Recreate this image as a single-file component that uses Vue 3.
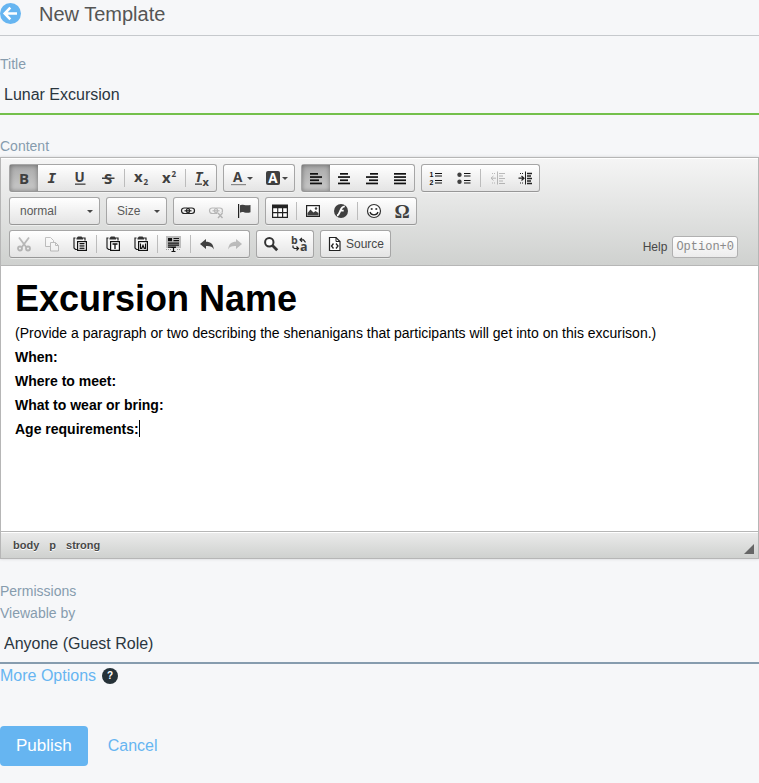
<script setup>
import { ref } from 'vue'

const title = ref('Lunar Excursion')
const format = ref('normal')
const size = ref('')
const viewer = ref('guest')

const glyph = (text, x, y, px, extra = '') =>
  `<text x="${x}" y="${y}" font-size="${px}" font-weight="700" font-family="Open Sans, sans-serif" ${extra}>${text}</text>`

const bars = (rows) =>
  rows.map(([x, w], i) => `<rect x="${x}" y="${3 + i * 3.2}" width="${w}" height="1.7" fill="#111"/>`).join('')

const clipboard =
  '<path d="M3.500 2H2v10l1.500 1.500H5M10.500 2H13V4.500" fill="none" stroke="#222" stroke-width="1.200"/><path d="M4.500 3.500V2L6 .5h3.500L11 2v1.500z" fill="#333"/><rect x="5.600" y="5.600" width="8.800" height="8.800" fill="#fff" stroke="#111" stroke-width="1.200"/>'

const chain =
  '<rect x="1.500" y="5" width="8" height="5.500" rx="2.700"/><rect x="6.500" y="5" width="8" height="5.500" rx="2.700"/><path d="M4.500 7.800h7"/>'

const icons = {
  bold: glyph('B', 3, 13.5, 15),
  italic: glyph('I', 3.5, 13, 14.5, 'font-style="italic" style="font-family:\'DejaVu Sans Mono\',monospace"'),
  underline: glyph('U', 2.5, 12, 13.5) + '<rect x="3" y="13.500" width="10.500" height="1.300"/>',
  strike: glyph('S', 4, 13.5, 15) + '<rect x="2" y="7.500" width="12.500" height="1.500"/>',
  sub: glyph('x', 1, 12, 15) + glyph('2', 10.5, 15, 8),
  sup: glyph('x', 1, 13, 15) + glyph('2', 10.5, 7, 8),
  clear: glyph('T', 1, 12, 14, 'font-style="italic"') + '<rect x="1" y="13.500" width="7" height="1.300"/>' + glyph('x', 8.5, 15.5, 11),
  color: glyph('A', 3, 12, 13.5) + '<rect x="1" y="14" width="15" height="1.200" fill="#888"/>',
  highlight: '<rect x="1" y="1" width="14" height="14" rx="2"/>' + glyph('A', 3.2, 13, 13.5, 'style="fill:#fff"'),
  left: bars([[2, 8], [2, 12], [2, 9], [2, 12]]),
  center: bars([[4, 8], [2, 12], [4, 8], [2, 12]]),
  right: bars([[6, 8], [2, 12], [5, 9], [2, 12]]),
  justify: bars([[2, 12], [2, 12], [2, 12], [2, 12]]),
  numbered:
    glyph('1', 1.5, 7, 7, 'style="font-family:\'Liberation Sans\',sans-serif;fill:#111"') +
    glyph('2', 1.5, 15, 7, 'style="font-family:\'Liberation Sans\',sans-serif;fill:#111"') +
    '<path d="M7 3.500h7M7 6h7M7 10.500h7M7 13h7" stroke="#111" stroke-width="1.200"/>',
  bullets:
    '<circle cx="3.500" cy="4.800" r="2.200"/><circle cx="3.500" cy="11.800" r="2.200"/><path d="M8 3.500h6.500M8 6h6.500M8 10.500h6.500M8 13h6.500" stroke="#111" stroke-width="1.200"/>',
  outdent:
    '<g fill="none" stroke="#333"><path d="M8.500 1.500v13"/><path d="M10 3.500h6M10 6h4M10 8.500h6M10 11h4M10 13.500h6" stroke-width="1.200"/><path d="M3 3.500h4M3 13h4" stroke-dasharray="1 1"/><path d="M2 8.200h5M4.500 6L2 8.200l2.500 2.300"/></g>',
  indent:
    '<g fill="none" stroke="#222"><path d="M8.500 1.500v13"/><path d="M10 3.500h5M10 6h4M10 8.500h5M10 11h4M10 13.500h5" stroke-width="1.300"/><path d="M3 3.500h4M3 13h4" stroke-dasharray="1 1"/><path d="M1.500 8.200h5M4.500 6L7 8.200l-2.500 2.300" stroke-width="1.200"/></g>',
  link: `<g fill="none" stroke="#222" stroke-width="1.200">${chain}</g>`,
  unlink: `<g fill="none" stroke="#333" stroke-width="1.200">${chain}<path d="M10 10l4.500 5M14.500 10L10 15" stroke="#f4f4f4" stroke-width="3"/><path d="M10 10l4.500 5M14.500 10L10 15" stroke-width="1.500"/></g>`,
  flag: '<rect x="2" y="1" width="1.200" height="14" fill="#222"/><path d="M4 2.300c2.500-1.800 4.500 1 10.500-.3v7.200C9 11 7 7.500 4 9.800z"/>',
  table: '<path d="M0 1.500h16V15H0z" fill="#222"/><path d="M1.200 5.300h4v3.700h-4zM6.300 5.300h3.700V9H6.300zM11.200 5.300h3.600V9h-3.600zM1.200 10.200h4v3.600h-4zM6.300 10.200h3.700v3.600H6.300zM11.200 10.200h3.600v3.600h-3.600z" fill="#fff"/>',
  image: '<rect x="1.600" y="2.600" width="12.800" height="10.800" fill="#fff" stroke="#222" stroke-width="1.200"/><circle cx="11" cy="5.500" r="1.200"/><path d="M2.500 12.500V10l3-3.500 3 3 2-1.500 3 2v2.500z"/>',
  flash: '<circle cx="8" cy="8" r="7"/><path d="M11.800 3.300C8.500 3.500 8 6 7 8.500S5.500 12.300 4 12.500M7.500 7.700h3.200" fill="none" stroke="#fff" stroke-width="1.800"/>',
  smile: '<circle cx="8" cy="8" r="6.500" fill="#fff" stroke="#333" stroke-width="1.200"/><circle cx="5.700" cy="6" r="1.100"/><circle cx="10.300" cy="6" r="1.100"/><path d="M4 9c1 3.800 7 3.800 8 0" fill="none" stroke="#222" stroke-width="1.200"/>',
  omega: glyph('Ω', 0.5, 14.5, 19, 'style="font-family:\'Liberation Serif\',serif"'),
  cut: '<g fill="none" stroke="#333" stroke-width="1.800"><path d="M3 1.500l7.500 10M13 1.500L5.500 11.500"/><circle cx="4" cy="12.500" r="2"/><circle cx="12" cy="12.500" r="2"/></g>',
  copy: '<g fill="#fff" stroke="#444"><path d="M1.500 1.500h5l3 3v6h-8z"/><path d="M6.500 6.500h5l3 3v5.500h-8z"/><path d="M11.500 6.500v3h3" fill="none"/></g>',
  paste: clipboard + '<path d="M7.500 7.500h5M7.500 9.200h5M7.500 10.900h5M7.500 12.600h5" stroke="#111"/>',
  pasteText: clipboard + '<path d="M7.500 8h5M10 8v5" fill="none" stroke="#111" stroke-width="1.300"/>',
  pasteWord: clipboard + '<path d="M7.500 7.500v4.800h1.300l1.200-3 1.200 3h1.300V7.500" fill="none" stroke="#111" stroke-width="1.200"/>',
  selectAll:
    '<rect x="0" y="0" width="15" height="12" fill="#bbb"/><path d="M2 2h4v3.200H2z" fill="#111"/><path d="M7.500 2.500H13M7.500 4.700H13M2 7.200h11M2 9.200h11M2 11.200h8" stroke="#111" stroke-width="1.200"/><path d="M5.500 11.500h4M7.500 11.500v4.200M5.500 15.500h4" stroke="#111" stroke-width="1.200"/><path d="M0 13.500h5M11 13.500h4" stroke="#999" stroke-dasharray="1 1"/>',
  undo: '<path d="M1 8l6-5v2.800c4.500 0 7.500 2.200 7.800 7.700C13.500 10.500 11 9.800 7 10v3z"/>',
  redo: '<path d="M15 8L9 3v2.800C4.500 5.800 1.500 8 1.200 13.500 2.500 10.500 5 9.800 9 10v3z"/>',
  find: '<circle cx="6.300" cy="6.300" r="4.200" fill="#fff" stroke="#333" stroke-width="2"/><path d="M9.500 9.500l4.700 4.700" stroke="#333" stroke-width="2.800"/>',
  replace: glyph('b', 0, 8, 10.5) + glyph('a', 9, 15, 12.5) +
    '<path d="M9 3.800h3.500l2 2.500M11 1.800l-2 2 2 2M2 9.500v2l1.500 1H7M5.500 10.500l2 2-2 2" fill="none" stroke="#222" stroke-width="1.200"/>',
  source: '<path d="M2.500 1.500H9l4 4v9H2.500z" fill="#fff" stroke="#222" stroke-width="1.200"/><path d="M9 1.500v4h4" fill="none" stroke="#222"/><path d="M6.500 7.500l-2 2.500 2 2.500M9 7.500l2 2.500-2 2.500" fill="none" stroke="#222" stroke-width="1.300"/>',
}

const b = (icon, label, extra = {}) => ({ icon, label, ...extra })
const sep = { sep: true }
const off = { disabled: true }

const rows = [
  [
    [b('bold', 'Bold', { on: true }), b('italic', 'Italic'), b('underline', 'Underline'), b('strike', 'Strike Through'), sep, b('sub', 'Subscript'), b('sup', 'Superscript'), sep, b('clear', 'Remove Format')],
    [b('color', 'Text Color', { menu: true }), b('highlight', 'Background Color', { menu: true })],
    [b('left', 'Align Left', { on: true }), b('center', 'Center'), b('right', 'Align Right'), b('justify', 'Justify')],
    [b('numbered', 'Numbered List'), b('bullets', 'Bulleted List'), sep, b('outdent', 'Decrease Indent', off), b('indent', 'Increase Indent')],
  ],
  [
    [b('link', 'Link'), b('unlink', 'Unlink', off), b('flag', 'Anchor')],
    [b('table', 'Table'), sep, b('image', 'Image'), b('flash', 'Flash'), sep, b('smile', 'Smiley'), b('omega', 'Special Character')],
  ],
  [
    [b('cut', 'Cut', off), b('copy', 'Copy', off), b('paste', 'Paste'), sep, b('pasteText', 'Paste as plain text'), b('pasteWord', 'Paste from Word'), sep, b('selectAll', 'Select All'), sep, b('undo', 'Undo'), b('redo', 'Redo', off)],
    [b('find', 'Find'), b('replace', 'Replace')],
    [b('source', 'Source', { text: 'Source' })],
  ],
]
</script>

<template>
  <main class="page">
    <header class="header">
      <a class="back" href="#" aria-label="Back">
        <svg viewBox="0 0 21 21" width="21" height="21">
          <circle cx="10.500" cy="10.500" r="10.500" fill="#66b5f1" />
          <path d="M17 10.500H5M10.300 4.700L4.700 10.500l5.600 5.800" fill="none" stroke="#fff" stroke-width="2.600" />
        </svg>
      </a>
      <h1>New Template</h1>
    </header>

    <form class="form" @submit.prevent>
      <label class="label" for="title">Title</label>
      <input id="title" v-model="title" class="field valid" type="text" />

      <div id="content-label" class="label content-label">Content</div>
      <section class="editor">
        <div class="toolbar" role="toolbar" aria-label="Editor toolbar">
          <div v-for="(row, r) in rows" :key="r" class="row">
            <template v-if="r === 1">
              <span class="combo format">
                <select v-model="format" aria-label="Paragraph Format">
                  <option value="normal">normal</option>
                </select>
              </span>
              <span class="combo size">
                <select v-model="size" aria-label="Font Size">
                  <option value="">Size</option>
                </select>
              </span>
            </template>
            <div v-for="(group, g) in row" :key="g" class="group">
              <template v-for="(item, i) in group" :key="i">
                <span v-if="item.sep" class="sep"></span>
                <button
                  v-else
                  type="button"
                  class="tool"
                  :class="{ on: item.on, menu: item.menu }"
                  :disabled="item.disabled"
                  :aria-label="item.label"
                >
                  <svg class="icon" viewBox="0 0 16 16" v-html="icons[item.icon]"></svg>
                  <span v-if="item.text">{{ item.text }}</span>
                </button>
              </template>
            </div>
            <div v-if="r === 2" class="help">Help <kbd>Option+0</kbd></div>
          </div>
        </div>
        <div class="document" contenteditable="true" role="textbox" aria-labelledby="content-label" spellcheck="false">
          <h2>Excursion Name</h2>
          <p>(Provide a paragraph or two describing the shenanigans that participants will get into on this excurison.)</p>
          <p><strong>When:</strong></p>
          <p><strong>Where to meet:</strong></p>
          <p><strong>What to wear or bring:</strong></p>
          <p><strong>Age requirements:</strong><span class="caret"></span></p>
        </div>
        <footer class="status">
          <a href="#">body</a><a href="#">p</a><a href="#">strong</a>
          <svg class="grip" viewBox="0 0 10 10" width="10" height="10"><path d="M10 0v10H0z" fill="#666" /></svg>
        </footer>
      </section>

      <div class="label permissions">Permissions</div>
      <label class="label" for="viewer">Viewable by</label>
      <select id="viewer" v-model="viewer" class="field">
        <option value="guest">Anyone (Guest Role)</option>
      </select>
      <div class="more">
        <a href="#">More Options</a>
        <button type="button" class="hint" aria-label="About permissions">?</button>
      </div>

      <div class="actions">
        <button type="submit" class="publish">Publish</button>
        <a href="#">Cancel</a>
      </div>
    </form>
  </main>
</template>

<style>
body {
  background: #f6f7f9;
}
</style>

<style scoped>
.page,
.page * {
  box-sizing: border-box;
}
.page {
  font-family: "Liberation Sans", Arial, sans-serif;
  color: #2a363f;
}
a {
  color: #66b5f1;
  text-decoration: none;
}
button,
input,
select {
  font-family: inherit;
  margin: 0;
}
.header {
  display: flex;
  align-items: center;
  gap: 18px;
  height: 36px;
  padding-bottom: 8px;
  border-bottom: 1px solid #c6c9cd;
}
.back {
  display: flex;
}
h1 {
  margin: 0;
  font-size: 20px;
  line-height: 24px;
  font-weight: 500;
  color: #555;
}
.form {
  display: flex;
  flex-direction: column;
  padding-top: 17px;
}
.label {
  font-size: 14px;
  line-height: 22px;
  font-weight: 500;
  color: #869cae;
}
.content-label {
  margin-top: 20px;
}
.permissions {
  margin-top: 21px;
}
.field {
  appearance: none;
  width: 100%;
  height: 40px;
  padding: 0 4px;
  border: 0;
  border-bottom: 2px solid #869cae;
  border-radius: 0;
  outline: none;
  background: transparent;
  font-size: 16px;
  color: #2a363f;
}
.field.valid {
  padding-top: 2px;
  border-color: #74c04c;
}

.editor {
  border: 1px solid #b6b6b6;
  box-shadow: 0 0 3px rgba(0, 0, 0, 0.15);
}
.toolbar {
  display: flex;
  flex-direction: column;
  gap: 5px;
  padding: 6px 8px 7px;
  border-bottom: 1px solid #b6b6b6;
  background: linear-gradient(#f5f5f5, #cfd1cf);
  box-shadow: inset 0 1px 0 #fff;
}
.row {
  display: flex;
  gap: 6px;
}
.group,
.combo {
  display: flex;
  height: 28px;
  border: 1px solid #a6a6a6;
  border-bottom-color: #979797;
  border-radius: 3px;
  background: linear-gradient(#fff, #e4e4e4);
  box-shadow: 0 1px 0 rgba(255, 255, 255, 0.5);
}
.tool {
  display: flex;
  align-items: center;
  gap: 3px;
  padding: 0 6px;
  border: 0;
  background: transparent;
  font-size: 12px;
  color: #474747;
}
.tool.on {
  background: linear-gradient(#aaa, #cacaca);
  box-shadow: inset 0 0 5px rgba(0, 0, 0, 0.4);
}
.tool:disabled .icon {
  opacity: 0.3;
}
.icon {
  width: 16px;
  height: 16px;
  fill: #404040;
  overflow: visible;
}
.tool.menu {
  gap: 1px;
}
.tool.menu::after,
.combo::after {
  content: "";
  border: 3px solid transparent;
  border-top-color: #474747;
  border-bottom: 0;
}
.sep {
  width: 1px;
  height: 18px;
  margin: 4px 2px;
  background: #bcbcbc;
}
.combo {
  position: relative;
}
.combo::after {
  position: absolute;
  top: 12px;
  right: 6px;
  pointer-events: none;
}
.combo select {
  appearance: none;
  width: 100%;
  padding: 0 10px;
  border: 0;
  outline: none;
  background: transparent;
  font-size: 12px;
  color: #5a5a5a;
}
.format {
  width: 91px;
}
.size {
  width: 61px;
}
.help {
  display: flex;
  align-items: center;
  align-self: flex-end;
  gap: 5px;
  margin-left: auto;
  margin-right: 12px;
  font-size: 12px;
  line-height: 20px;
  color: #474747;
}
kbd {
  padding: 0 3px;
  border: 1px solid #b0b0b0;
  border-radius: 3px;
  background: linear-gradient(#fff, #ececec);
  font-family: "Liberation Mono", monospace;
  font-size: 12px;
  color: #8a8a8a;
}
.document {
  min-height: 265px;
  padding: 11px 14px;
  outline: none;
  background: #fff;
  color: #000;
  font-size: 14px;
  line-height: 24px;
}
h2 {
  margin: 0;
  font-size: 36px;
  line-height: 44px;
}
p {
  margin: 0;
}
.caret {
  display: inline-block;
  width: 1px;
  height: 17px;
  vertical-align: -3px;
  background: #000;
}
.status {
  display: flex;
  align-items: center;
  gap: 10px;
  height: 27px;
  padding: 0 4px 0 12px;
  border-top: 1px solid #b6b6b6;
  background: linear-gradient(#ebebeb, #cfd1cf);
  box-shadow: inset 0 1px 0 #fff;
}
.status a {
  font-size: 11px;
  font-weight: 700;
  color: #484848;
  text-shadow: 0 1px 0 #fff;
}
.grip {
  align-self: flex-end;
  margin-left: auto;
  margin-bottom: 4px;
}
.more {
  display: flex;
  align-items: center;
  gap: 6px;
  font-size: 16px;
  line-height: 24px;
}
.hint {
  width: 16px;
  height: 16px;
  padding: 0;
  border: 0;
  border-radius: 50%;
  background: #263238;
  font-size: 10px;
  font-weight: 700;
  line-height: 16px;
  color: #fff;
}
.actions {
  display: flex;
  align-items: center;
  gap: 20px;
  margin-top: 38px;
  font-size: 16px;
}
.publish {
  height: 40px;
  padding: 0 16px;
  border: 0;
  border-radius: 4px;
  background: #66b5f1;
  font-size: 17px;
  color: #fff;
}
</style>
